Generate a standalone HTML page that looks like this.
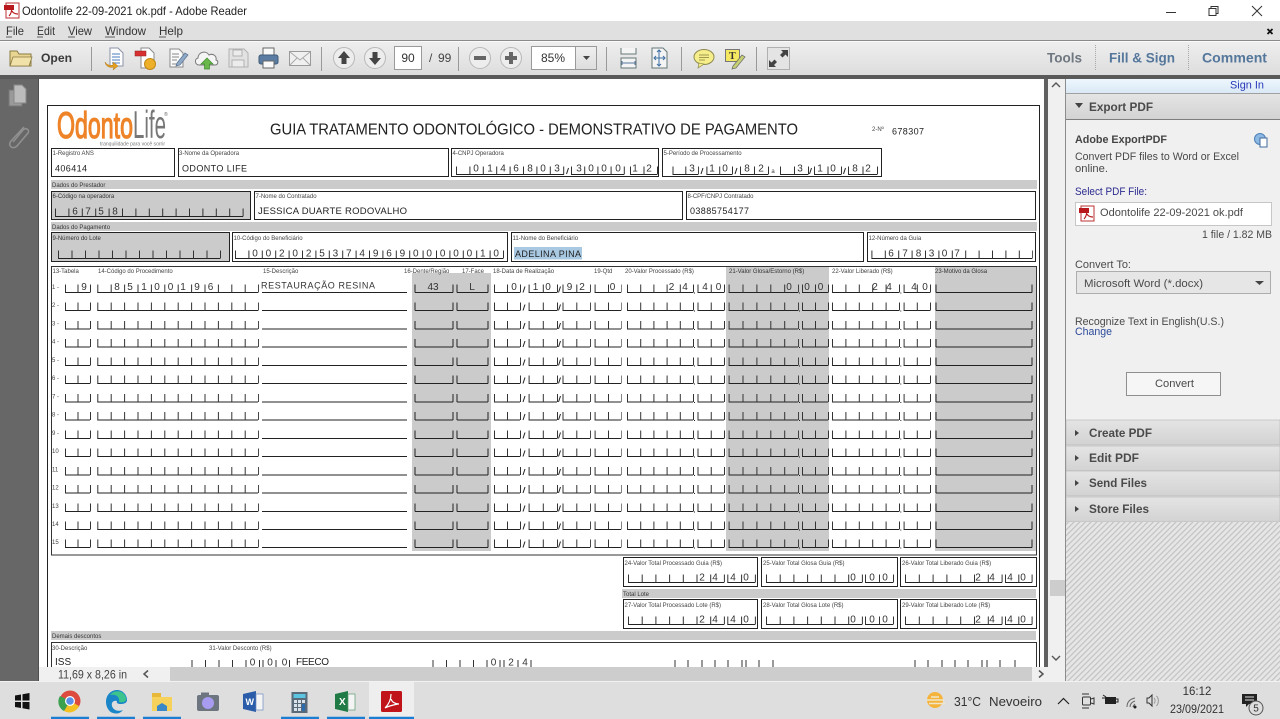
<!DOCTYPE html>
<html lang="pt">
<head>
<meta charset="utf-8">
<title>Odontolife 22-09-2021 ok.pdf - Adobe Reader</title>
<style>
html,body{margin:0;padding:0;background:#fff;width:1280px;height:719px;overflow:hidden}
svg{display:block;position:absolute;left:0;top:0;filter:blur(.3px)}
text{font-family:"Liberation Sans",sans-serif;fill:#333}
.l{font-size:6px;fill:#444}
.v{font-size:9px;fill:#222}
.d{font-size:10px;fill:#333;transform:translateY(.5px)}
.s{font-size:11px;fill:#4a4a4a}
.h{font-size:12px;font-weight:bold;fill:#4a4a4a}
.m{font-size:12px;fill:#333}
.b{stroke:#222;stroke-width:1;fill:none}
.t{stroke:#333;stroke-width:8;fill:none}
.f{fill:#fff;stroke:#222;stroke-width:1}
.g{fill:#cbcbcb;stroke:#222;stroke-width:1}
.bd{fill:#cbcbcb}
</style>
</head>
<body>
<svg width="1280" height="719" viewBox="0 0 1280 719" xmlns="http://www.w3.org/2000/svg">
<defs>
<linearGradient id="tb" x1="0" y1="0" x2="0" y2="1"><stop offset="0" stop-color="#efefef"/><stop offset="1" stop-color="#dddddd"/></linearGradient>
<linearGradient id="sec" x1="0" y1="0" x2="0" y2="1"><stop offset="0" stop-color="#e4e4e4"/><stop offset="1" stop-color="#d2d2d2"/></linearGradient>
<linearGradient id="sign" x1="0" y1="0" x2="0" y2="1"><stop offset="0" stop-color="#eef6fd"/><stop offset="1" stop-color="#d9e8f5"/></linearGradient>
<pattern id="hatch" width="4" height="4" patternUnits="userSpaceOnUse" patternTransform="rotate(45)"><rect width="4" height="4" fill="#e6e6e6"/><rect width="1.2" height="4" fill="#c2c2c2"/></pattern>
<g id="row">
<path class="b" d="M65 0H90M97.3 0H258M262 0H407M415 0H453M457 0H488M494 0H520M528.6 0H557M562.5 0H590M594.6 0H621M627 0H693M697.5 0H724M728.6 0H798M802 0H828M832 0H899M903.6 0H930M936 0H1032"/>
<path class="b" d="M415 0v-8M453 0v-8M457 0v-8M488 0v-8M936 0v-8M1032 0v-8M523 0l2-6M558.5 0l2-6M694.5 0v1M799.5 0v1M900.8 0v1"/>
<path class="t" d="M65 -4H91" stroke-dasharray="1 11.5"/>
<path class="t" d="M97.3 -4H259" stroke-dasharray="1 12.4"/>
<path class="t" d="M494 -4H521" stroke-dasharray="1 12"/>
<path class="t" d="M528.6 -4H558" stroke-dasharray="1 13.2"/>
<path class="t" d="M562.5 -4H591" stroke-dasharray="1 12.8"/>
<path class="t" d="M594.6 -4H622" stroke-dasharray="1 12.4"/>
<path class="t" d="M627 -4H694" stroke-dasharray="1 12.2"/>
<path class="t" d="M697.5 -4H725" stroke-dasharray="1 12.25"/>
<path class="t" d="M728.6 -4H799" stroke-dasharray="1 12.9"/>
<path class="t" d="M802 -4H829" stroke-dasharray="1 12"/>
<path class="t" d="M832 -4H900" stroke-dasharray="1 12.4"/>
<path class="t" d="M903.6 -4H931" stroke-dasharray="1 12.2"/>
</g>
<g id="pdfi"><rect x="0" y="0" width="13" height="15" fill="#fff" stroke="#b33" stroke-width="1"/><rect x="-2" y="2" width="10" height="5" fill="#b8181c"/><path d="M3 13c2-2 3-6 3-10M6 8c1 2 3 3 6 3" stroke="#b8181c" fill="none" stroke-width="1.2"/></g>
</defs>

<!-- window base -->
<rect width="1280" height="719" fill="#fff"/>

<!-- title bar -->
<use href="#pdfi" x="6" y="3"/>
<text x="22" y="15" style="fill:#222;font-size:12px" textLength="225" lengthAdjust="spacingAndGlyphs">Odontolife 22-09-2021 ok.pdf - Adobe Reader</text>
<path d="M1166 12.5h10" stroke="#333" fill="none"/>
<path d="M1209 8.5h7v7h-7zM1211 8.500v-2h7v7h-2" stroke="#333" fill="none"/>
<path d="M1252 6l10 10M1262 6l-10 10" stroke="#333" fill="none"/>

<!-- menu bar -->
<rect x="0" y="21" width="1280" height="19" fill="#e0e0e0"/>
<g>
<text x="6" y="35" class="m" textLength="18" lengthAdjust="spacingAndGlyphs">File</text>
<text x="37" y="35" class="m" textLength="18" lengthAdjust="spacingAndGlyphs">Edit</text>
<text x="68" y="35" class="m" textLength="24" lengthAdjust="spacingAndGlyphs">View</text>
<text x="105" y="35" class="m" textLength="41" lengthAdjust="spacingAndGlyphs">Window</text>
<text x="159" y="35" class="m" textLength="24" lengthAdjust="spacingAndGlyphs">Help</text>
<path d="M6 37h6M37 37h6M68 37h7M105 37h10M159 37h7" stroke="#333" stroke-width=".8"/>
</g>
<path d="M1267.500 29l5 5M1272.500 29l-5 5" stroke="#111" stroke-width="1.800"/>

<!-- toolbar -->
<rect x="0" y="40" width="1280" height="35" fill="url(#tb)"/>
<path d="M0 40.500H1280" stroke="#8a8a8a"/>
<path d="M0 41.500H1280" stroke="#fafafa"/>
<!-- open -->
<path d="M10 51h7l2 3h12v12H10z" fill="#e8d592" stroke="#8a7a40"/>
<path d="M10 66l3-9h19l-3 9z" fill="#f0e2a8" stroke="#8a7a40" stroke-width=".8"/>
<text x="41" y="62" class="h" style="fill:#3a3a3a" textLength="31" lengthAdjust="spacingAndGlyphs">Open</text>
<path d="M91.500 47V71M321.500 47V71M458.500 47V71M606.500 47V71M681.500 47V71M756.500 47V71" stroke="#9a9a9a"/>
<!-- create/doc -->
<path d="M110 48h8l5 5v13h-13z" fill="#fdfdfd" stroke="#8b93a8"/>
<path d="M112 54h8M112 57h8M112 60h8M112 63h8" stroke="#4a7cc0"/>
<path d="M105 62c1 5 5 6 9 5l-1 3 5-4-5-4v3c-3 1-6 0-8-3z" fill="#e6a020" stroke="#a8741a" stroke-width=".5"/>
<!-- combine -->
<path d="M141 48h8l5 5v15h-13z" fill="#fdfdfd" stroke="#8b8b8b"/>
<rect x="135" y="51" width="11" height="5" fill="#d83030" stroke="#902020" stroke-width=".5"/>
<circle cx="150" cy="64" r="5.500" fill="#eeb028" stroke="#c08818"/>
<!-- edit -->
<path d="M170 49h9l4 4v14h-13z" fill="#fafafa" stroke="#8b8b8b"/>
<path d="M172 54h7M172 57h7M172 60h5M172 64h7" stroke="#888"/>
<path d="M177 63l8-10 3 2-8 10-4 1z" fill="#8faac8" stroke="#56708e" stroke-width=".7"/>
<!-- cloud -->
<path d="M199 65c-4 0-5-6-1-7 0-6 8-8 11-3 4-2 8 1 7 5 3 1 2 5-1 5z" fill="#f5f5f5" stroke="#7a7a7a"/>
<path d="M207 58l6 6h-3.500v5h-5v-5H201z" fill="#6ab84a" stroke="#3e8a2c" stroke-width=".7"/>
<!-- save -->
<path d="M229 49h15l4 4v14h-19z" fill="#e2e2e2" stroke="#b2b2b2"/>
<rect x="233" y="50" width="9" height="6" fill="#ececec" stroke="#b2b2b2"/>
<rect x="232" y="60" width="12" height="7" fill="#ececec" stroke="#b2b2b2"/>
<!-- print -->
<rect x="263" y="48" width="11" height="8" fill="#fafafa" stroke="#666"/>
<rect x="259" y="55" width="19" height="9" rx="2" fill="#5b7da3" stroke="#3f5a78"/>
<rect x="263" y="61" width="11" height="7" fill="#fafafa" stroke="#666"/>
<!-- mail -->
<rect x="289.500" y="51.500" width="21" height="14" fill="#f0f0f0" stroke="#9a9a9a"/>
<path d="M290 52l10 8 10-8M290 65l7-7M310 65l-7-7" stroke="#aaa" fill="none"/>
<!-- page nav -->
<circle cx="344" cy="58" r="10.500" fill="#ededed" stroke="#b8b8b8"/>
<path d="M344 51l6 7h-3.500v6h-5v-6H338z" fill="#444"/>
<circle cx="375" cy="58" r="10.500" fill="#ededed" stroke="#b8b8b8"/>
<path d="M375 65l6-7h-3.500v-6h-5v6H369z" fill="#444"/>
<rect x="394.500" y="46.500" width="27" height="23" fill="#fff" stroke="#9a9a9a"/>
<text x="408" y="62" text-anchor="middle" style="fill:#333;font-size:12px">90</text>
<text x="429" y="62" style="fill:#444;font-size:12px">/</text>
<text x="438" y="62" style="fill:#444;font-size:12px">99</text>
<circle cx="480" cy="58" r="10.500" fill="#ededed" stroke="#b8b8b8"/>
<rect x="474" y="56" width="12" height="4" fill="#666"/>
<circle cx="511" cy="58" r="10.500" fill="#ededed" stroke="#b8b8b8"/>
<path d="M509 52h4v4h4v4h-4v4h-4v-4h-4v-4h4z" fill="#666"/>
<rect x="531.500" y="46.500" width="65" height="23" fill="#fff" stroke="#9a9a9a"/>
<rect x="575.500" y="46.500" width="21" height="23" fill="url(#tb)" stroke="#9a9a9a"/>
<path d="M583 56h7l-3.500 4z" fill="#444"/>
<text x="553" y="62" text-anchor="middle" style="fill:#333;font-size:12px">85%</text>
<!-- fit icons -->
<path d="M621 48v6h15v-6M621 58h15v10h-15z" fill="#f4f4f4" stroke="#677"/>
<path d="M622 63h13M622 61v4M635 61v4" stroke="#5878a0" fill="none"/>
<path d="M652 48h11l4 4v16h-15z" fill="#f4f4f4" stroke="#677"/>
<path d="M659 50v16M654 58h11M657 52l2-2 2 2M657 64l2 2 2-2M656 56l-2 2 2 2M663 56l2 2-2 2" stroke="#3d6ea3" fill="none"/>
<!-- comment -->
<ellipse cx="704" cy="57" rx="10" ry="7.500" fill="#f5ee8a" stroke="#8f8a50"/>
<path d="M699 63l-1 5 6-4z" fill="#f5ee8a" stroke="#8f8a50" stroke-width=".7"/>
<path d="M699 55h10M699 57.500h10M699 60h6" stroke="#a09a50"/>
<rect x="725.500" y="49.500" width="14" height="12" fill="#f4e860" stroke="#777"/>
<text x="729" y="59" style="font-size:10px;font-weight:bold;fill:#333;font-family:'Liberation Serif',serif">T</text>
<path d="M733 66l9-11 3 2-9 11-4 1z" fill="#c6cf72" stroke="#666" stroke-width=".7"/>
<!-- fullscreen -->
<rect x="767.500" y="47.500" width="22" height="22" fill="#e4e4e4" stroke="#b0b0b0"/>
<path d="M781 50h7v7l-2.500-2.500-3 3-2.500-2.500 3-3z" fill="#444"/>
<path d="M776 67h-7v-7l2.500 2.500 3-3 2.500 2.500-3 3z" fill="#444"/>
<!-- tools labels -->
<text x="1047" y="62.500" style="font-size:14px;font-weight:bold;fill:#6f7780" textLength="35" lengthAdjust="spacingAndGlyphs">Tools</text>
<text x="1109" y="62.500" style="font-size:14px;font-weight:bold;fill:#54779b" textLength="66" lengthAdjust="spacingAndGlyphs">Fill &amp; Sign</text>
<text x="1202" y="62.500" style="font-size:14px;font-weight:bold;fill:#54779b" textLength="65" lengthAdjust="spacingAndGlyphs">Comment</text>
<path d="M1095.500 45V71M1188.500 45V71" stroke="#a8a8a8" stroke-dasharray="1 1"/>
<rect x="0" y="75" width="1280" height="4" fill="#595959"/>

<!-- left panel -->
<rect x="0" y="79" width="39" height="602" fill="#676767"/>
<path d="M38.500 79V681" stroke="#4f4f4f"/>
<path d="M9 90h13v16H9z" fill="#9a9a9a" stroke="#777"/>
<path d="M14 85h8l4 4v14H14z" fill="#bcbcbc" stroke="#888"/>
<path d="M24 127l-13 14c-4 5 2 9 6 5l11-13c2-3-2-6-5-3l-10 12" fill="none" stroke="#909090" stroke-width="1.600"/>

<!-- doc area -->
<rect x="39" y="79" width="1005" height="588" fill="#fff"/>
<rect x="1044" y="79" width="4" height="588" fill="#606060"/>
<rect x="1048" y="79" width="17" height="588" fill="#f0f0f0"/>
<rect x="1050" y="580" width="15" height="16" fill="#cdcdcd"/>
<path d="M1052 87l4-4 4 4M1052 656l4 4 4-4" stroke="#555" fill="none" stroke-width="1.400"/>

<!-- page -->
<path d="M47.500 667V105.500H1039.500V667" fill="none" stroke="#222"/>

<!-- logo -->
<text x="57" y="138" style="font-size:37px;fill:#ee8328;stroke:#ee8328;stroke-width:1.300" textLength="76" lengthAdjust="spacingAndGlyphs">Odonto</text>
<text x="133" y="138" style="font-size:39px;fill:#777" textLength="33" lengthAdjust="spacingAndGlyphs">Life</text>
<text x="164" y="116" style="font-size:5px;fill:#666">®</text>
<text x="100" y="145.500" style="font-size:5px;fill:#777" textLength="65" lengthAdjust="spacingAndGlyphs">tranquilidade para você sorrir</text>

<text x="270" y="134.500" style="font-size:15.500px;fill:#222" textLength="528" lengthAdjust="spacingAndGlyphs">GUIA TRATAMENTO ODONTOLÓGICO - DEMONSTRATIVO DE PAGAMENTO</text>
<text x="872" y="131" class="l">2-Nº</text>
<text x="892" y="134.500" class="v" textLength="32">678307</text>

<!-- row 1 boxes -->
<rect class="f" x="51.500" y="148.500" width="123" height="28"/>
<rect class="f" x="178.500" y="148.500" width="270" height="28"/>
<rect class="f" x="451.500" y="148.500" width="207" height="28"/>
<rect class="f" x="662.500" y="148.500" width="219" height="28"/>
<text x="52.500" y="155" class="l">1-Registro ANS</text>
<text x="179" y="155" class="l">3-Nome da Operadora</text>
<text x="452.500" y="155" class="l">4-CNPJ Operadora</text>
<text x="663.500" y="155" class="l">5-Período de Processamento</text>
<text x="55" y="171.500" class="v" textLength="32">406414</text>
<text x="182" y="171.500" class="v" textLength="65">ODONTO LIFE</text>
<path class="b" d="M456 174.500H564M571 174.500H624M630 174.500H657M672.500 174.500H698M706.400 174.500H732M740 174.500H768M780 174.500H808M814 174.500H841M848 174.500H877"/>
<path class="t" d="M456 170.500H565" stroke-dasharray="1 12.400"/>
<path class="t" d="M571 170.500H625" stroke-dasharray="1 12.200"/>
<path class="t" d="M630 170.500H658" stroke-dasharray="1 12.500"/>
<path class="t" d="M672.500 170.500H699" stroke-dasharray="1 11.800"/>
<path class="t" d="M706.400 170.500H733" stroke-dasharray="1 11.800"/>
<path class="t" d="M740 170.500H769" stroke-dasharray="1 13"/>
<path class="t" d="M780 170.500H809" stroke-dasharray="1 13"/>
<path class="t" d="M814 170.500H842" stroke-dasharray="1 12.500"/>
<path class="t" d="M848 170.500H878" stroke-dasharray="1 13.500"/>
<path class="b" d="M566.500 174l2-6M701 174l2-6M735 174l2-6M809.500 174l2-6M843.500 174l2-6"/>
<g text-anchor="middle">
<text x="476" y="171" class="d">0</text><text x="490" y="171" class="d">1</text><text x="503" y="171" class="d">4</text><text x="516" y="171" class="d">6</text><text x="530" y="171" class="d">8</text><text x="543" y="171" class="d">0</text><text x="557" y="171" class="d">3</text><text x="579" y="171" class="d">3</text><text x="591" y="171" class="d">0</text><text x="604" y="171" class="d">0</text><text x="618" y="171" class="d">0</text><text x="635" y="171" class="d">1</text><text x="649" y="171" class="d">2</text>
<text x="692" y="171" class="d">3</text><text x="712" y="171" class="d">1</text><text x="725" y="171" class="d">0</text><text x="747" y="171" class="d">8</text><text x="761" y="171" class="d">2</text><text x="800" y="171" class="d">3</text><text x="820" y="171" class="d">1</text><text x="833" y="171" class="d">0</text><text x="855" y="171" class="d">8</text><text x="868" y="171" class="d">2</text>
<text x="773" y="173" class="l">a</text>
</g>

<!-- band -->
<rect class="bd" x="51" y="180" width="986" height="9"/>
<text x="52" y="187" class="l" style="fill:#333">Dados do Prestador</text>

<!-- row 2 -->
<rect class="g" x="51.500" y="191.500" width="199" height="28"/>
<rect class="f" x="254.500" y="191.500" width="428" height="28"/>
<rect class="f" x="686.500" y="191.500" width="349" height="28"/>
<text x="52.500" y="198" class="l" style="fill:#333">6-Código na operadora</text>
<text x="255.500" y="198" class="l">7-Nome do Contratado</text>
<text x="687.500" y="198" class="l">8-CPF/CNPJ Contratado</text>
<path class="b" d="M55 216.500H243"/>
<path class="t" d="M55 212.500H244" stroke-dasharray="1 12.400"/>
<g text-anchor="middle"><text x="75" y="214" class="d">6</text><text x="88" y="214" class="d">7</text><text x="101" y="214" class="d">5</text><text x="115" y="214" class="d">8</text></g>
<text x="258" y="214" class="v" style="font-size:9.500px" textLength="149">JESSICA DUARTE RODOVALHO</text>
<text x="690" y="214" class="v" textLength="59">03885754177</text>

<!-- band -->
<rect class="bd" x="51" y="222" width="986" height="9"/>
<text x="52" y="229" class="l" style="fill:#333">Dados do Pagamento</text>

<!-- row 3 -->
<rect class="g" x="51.500" y="232.500" width="178" height="29"/>
<rect class="f" x="232.500" y="232.500" width="275" height="29"/>
<rect class="f" x="511.500" y="232.500" width="352" height="29"/>
<rect class="f" x="867.500" y="232.500" width="168" height="29"/>
<text x="52.500" y="240" class="l" style="fill:#333">9-Número do Lote</text>
<text x="233.500" y="240" class="l">10-Código do Beneficiário</text>
<text x="512.500" y="240" class="l">11-Nome do Beneficiário</text>
<text x="868.500" y="240" class="l">12-Número da Guia</text>
<path class="b" d="M58 258.500H220M235 258.500H503M871.400 258.500H1032"/>
<path class="t" d="M58 254.500H221" stroke-dasharray="1 12.500"/>
<path class="t" d="M235 254.500H504" stroke-dasharray="1 12.400"/>
<path class="t" d="M871.400 254.500H1033" stroke-dasharray="1 12.400"/>
<g text-anchor="middle">
<text x="255" y="256" class="d">0</text><text x="268.400" y="256" class="d">0</text><text x="281.800" y="256" class="d">2</text><text x="295.200" y="256" class="d">0</text><text x="308.600" y="256" class="d">2</text><text x="322" y="256" class="d">5</text><text x="335.400" y="256" class="d">3</text><text x="348.800" y="256" class="d">7</text><text x="362.200" y="256" class="d">4</text><text x="375.600" y="256" class="d">9</text><text x="389" y="256" class="d">6</text><text x="402.400" y="256" class="d">9</text><text x="415.800" y="256" class="d">0</text><text x="429.200" y="256" class="d">0</text><text x="442.600" y="256" class="d">0</text><text x="456" y="256" class="d">0</text><text x="469.400" y="256" class="d">0</text><text x="482.800" y="256" class="d">1</text><text x="496.200" y="256" class="d">0</text>
<text x="891" y="256" class="d">6</text><text x="905" y="256" class="d">7</text><text x="918.500" y="256" class="d">8</text><text x="931.500" y="256" class="d">3</text><text x="944.500" y="256" class="d">0</text><text x="957" y="256" class="d">7</text>
</g>
<rect x="514" y="247" width="68" height="12.500" fill="#a9c8e2"/>
<text x="515" y="257" class="v" textLength="66">ADELINA PINA</text>

<!-- table -->
<rect class="bd" x="412" y="273" width="79" height="278"/>
<rect class="bd" x="726" y="266" width="103" height="285"/>
<rect class="bd" x="935" y="266" width="101" height="285"/>
<rect x="51.500" y="266.500" width="985" height="288.500" fill="none" stroke="#333"/>
<g>
<text x="52.500" y="273" class="l">13-Tabela</text>
<text x="98" y="273" class="l">14-Código do Procedimento</text>
<text x="263" y="273" class="l">15-Descrição</text>
<text x="404" y="273" class="l">16-Dente/Região</text>
<text x="462" y="273" class="l">17-Face</text>
<text x="493" y="273" class="l">18-Data de Realização</text>
<text x="594" y="273" class="l">19-Qtd</text>
<text x="625" y="273" class="l">20-Valor Processado (R$)</text>
<text x="729" y="273" class="l" style="fill:#333">21-Valor Glosa/Estorno (R$)</text>
<text x="832" y="273" class="l">22-Valor Liberado (R$)</text>
<text x="935" y="273" class="l" style="fill:#333">23-Motivo da Glosa</text>
</g>
<use href="#row" y="292.500"/><use href="#row" y="310.500"/><use href="#row" y="329"/><use href="#row" y="347"/><use href="#row" y="365.500"/><use href="#row" y="383.500"/><use href="#row" y="402"/><use href="#row" y="420"/><use href="#row" y="438.500"/><use href="#row" y="456.500"/><use href="#row" y="475"/><use href="#row" y="493"/><use href="#row" y="511.500"/><use href="#row" y="529.500"/><use href="#row" y="547.500"/>
<g>
<text x="52" y="289" class="l">1 -</text><text x="52" y="307" class="l">2 -</text><text x="52" y="325.500" class="l">3 -</text><text x="52" y="343.500" class="l">4 -</text><text x="52" y="362" class="l">5 -</text><text x="52" y="380" class="l">6 -</text><text x="52" y="398.500" class="l">7 -</text><text x="52" y="416.500" class="l">8 -</text><text x="52" y="435" class="l">9 -</text><text x="52" y="453" class="l">10</text><text x="52" y="471.500" class="l">11</text><text x="52" y="489.500" class="l">12</text><text x="52" y="508" class="l">13</text><text x="52" y="526" class="l">14</text><text x="52" y="544" class="l">15</text>
</g>
<g text-anchor="middle">
<text x="84" y="289.500" class="d">9</text>
<text x="117" y="289.500" class="d">8</text><text x="130" y="289.500" class="d">5</text><text x="144" y="289.500" class="d">1</text><text x="157" y="289.500" class="d">0</text><text x="170.500" y="289.500" class="d">0</text><text x="183" y="289.500" class="d">1</text><text x="197" y="289.500" class="d">9</text><text x="210.500" y="289.500" class="d">6</text>
<text x="433" y="289.500" class="d">43</text><text x="472" y="289.500" class="d">L</text>
<text x="514" y="289.500" class="d">0</text><text x="535.500" y="289.500" class="d">1</text><text x="548" y="289.500" class="d">0</text><text x="569.500" y="289.500" class="d">9</text><text x="582" y="289.500" class="d">2</text><text x="612.500" y="289.500" class="d">0</text>
<text x="671.500" y="289.500" class="d">2</text><text x="685" y="289.500" class="d">4</text><text x="705" y="289.500" class="d">4</text><text x="718.500" y="289.500" class="d">0</text>
<text x="789" y="289.500" class="d">0</text><text x="807" y="289.500" class="d">0</text><text x="820.500" y="289.500" class="d">0</text>
<text x="875" y="289.500" class="d">2</text><text x="889" y="289.500" class="d">4</text><text x="914" y="289.500" class="d">4</text><text x="925" y="289.500" class="d">0</text>
</g>
<text x="261" y="288.500" class="v" style="fill:#333" textLength="114">RESTAURAÇÃO RESINA</text>

<!-- totals -->
<rect class="f" x="623.500" y="557.500" width="134" height="29"/>
<rect class="f" x="761.500" y="557.500" width="136" height="29"/>
<rect class="f" x="900.500" y="557.500" width="136" height="29"/>
<rect class="f" x="623.500" y="599.500" width="134" height="29"/>
<rect class="f" x="761.500" y="599.500" width="136" height="29"/>
<rect class="f" x="900.500" y="599.500" width="136" height="29"/>
<text x="624.500" y="565" class="l">24-Valor Total Processado Guia (R$)</text>
<text x="763" y="565" class="l">25-Valor Total Glosa Guia (R$)</text>
<text x="902" y="565" class="l">26-Valor Total Liberado Guia (R$)</text>
<text x="624.500" y="607" class="l">27-Valor Total Processado Lote (R$)</text>
<text x="763" y="607" class="l">28-Valor Total Glosa Lote (R$)</text>
<text x="902" y="607" class="l">29-Valor Total Liberado Lote (R$)</text>
<rect class="bd" x="622" y="589" width="414" height="9"/>
<text x="623" y="596" class="l" style="fill:#333">Total Lote</text>
<g id="tot">
<path class="b" d="M628 582.500H724M727.300 582.500H755M766 582.500H862M865 582.500H893M905 582.500H1002M1005 582.500H1032"/>
<path class="t" d="M628 578.500H725" stroke-dasharray="1 12.700"/>
<path class="t" d="M727.300 578.500H756" stroke-dasharray="1 12.800"/>
<path class="t" d="M766 578.500H863" stroke-dasharray="1 12.700"/>
<path class="t" d="M865 578.500H894" stroke-dasharray="1 13"/>
<path class="t" d="M905 578.500H1003" stroke-dasharray="1 12.800"/>
<path class="t" d="M1005 578.500H1033" stroke-dasharray="1 12.300"/>
<g text-anchor="middle">
<text x="702" y="580" class="d">2</text><text x="715" y="580" class="d">4</text><text x="733" y="580" class="d">4</text><text x="746" y="580" class="d">0</text>
<text x="853" y="580" class="d">0</text><text x="872" y="580" class="d">0</text><text x="885" y="580" class="d">0</text>
<text x="978" y="580" class="d">2</text><text x="992" y="580" class="d">4</text><text x="1010" y="580" class="d">4</text><text x="1023" y="580" class="d">0</text>
</g>
</g>
<use href="#tot" y="42"/>

<rect class="bd" x="51" y="631" width="985" height="9"/>
<text x="52" y="638" class="l" style="fill:#333">Demais descontos</text>
<rect x="51.500" y="642.500" width="985" height="40" fill="#fff" stroke="#333"/>
<text x="52" y="650" class="l">30-Descrição</text>
<text x="209" y="650" class="l">31-Valor Desconto (R$)</text>
<text x="55" y="665" style="font-size:10px;fill:#222">ISS</text>
<text x="296" y="665" style="font-size:10px;fill:#222" textLength="33">FEECO</text>
<path d="M192 660v7M205.500 660v7M219 660v7M232.500 660v7M246 660v7M259.500 660v7M263 660v7M276 660v7M289.500 660v7M433 660v7M446.500 660v7M460 660v7M473.500 660v7M487 660v7M500 660v7M504 660v7M518 660v7M531 660v7M675 660v7M688 660v7M702 660v7M715 660v7M728 660v7M742 660v7M746 660v7M759 660v7M773 660v7M915 660v7M928 660v7M942 660v7M955 660v7M968 660v7M982 660v7M987 660v7M1000 660v7M1015 660v7" stroke="#333"/>
<g text-anchor="middle">
<text x="252.500" y="665" class="d">0</text><text x="270" y="665" class="d">0</text><text x="284.500" y="665" class="d">0</text>
<text x="493.500" y="665" class="d">0</text><text x="511" y="665" class="d">2</text><text x="525" y="665" class="d">4</text>
</g>

<!-- horizontal scrollbar -->
<rect x="39" y="667" width="1026" height="14" fill="#f0f0f0"/>
<rect x="170" y="667" width="862" height="14" fill="#cdcdcd"/>
<text x="58" y="678.500" style="font-size:12px;fill:#444" textLength="69" lengthAdjust="spacingAndGlyphs">11,69 x 8,26 in</text>
<path d="M148 670.500l-4 3.500 4 3.500M1039 670.500l4 3.500-4 3.500" stroke="#555" fill="none" stroke-width="1.500"/>

<!-- right panel -->
<rect x="1065" y="79" width="215" height="602" fill="#f0f0f0"/>
<path d="M1065.500 79V681" stroke="#8c8c8c"/>
<rect x="1066" y="79" width="214" height="14" fill="url(#sign)"/>
<text x="1230" y="88.500" style="font-size:11px;fill:#2638b8" textLength="34" lengthAdjust="spacingAndGlyphs">Sign In</text>
<rect x="1066" y="94" width="214" height="26" fill="url(#sec)"/>
<path d="M1066 93.500H1280" stroke="#a0a0a0"/>
<path d="M1066 119.500H1280" stroke="#7e7e7e"/>
<path d="M1075 103h8l-4 5z" fill="#444"/>
<text x="1089" y="111" class="h" textLength="64" lengthAdjust="spacingAndGlyphs">Export PDF</text>
<text x="1075" y="143" class="s" style="font-weight:bold;fill:#444" textLength="92" lengthAdjust="spacingAndGlyphs">Adobe ExportPDF</text>
<circle cx="1260" cy="139" r="5.500" fill="#8cb8e4" stroke="#4d7fb8"/>
<path d="M1260 138h7v9h-7z" fill="#fff" stroke="#406a9c"/>
<text x="1075" y="160" class="s" textLength="164" lengthAdjust="spacingAndGlyphs">Convert PDF files to Word or Excel</text>
<text x="1075" y="172" class="s" textLength="33" lengthAdjust="spacingAndGlyphs">online.</text>
<text x="1075" y="195" class="s" style="fill:#2b2b90" textLength="72" lengthAdjust="spacingAndGlyphs">Select PDF File:</text>
<rect x="1075.500" y="202.500" width="196" height="23" fill="#fff" stroke="#c6c6c6"/>
<use href="#pdfi" x="1081" y="206"/>
<text x="1100" y="216" class="s" textLength="143" lengthAdjust="spacingAndGlyphs">Odontolife 22-09-2021 ok.pdf</text>
<text x="1202" y="238" class="s" textLength="70" lengthAdjust="spacingAndGlyphs">1 file / 1.82 MB</text>
<text x="1075" y="268" class="s" textLength="56" lengthAdjust="spacingAndGlyphs">Convert To:</text>
<rect x="1076.500" y="271.500" width="194" height="22" fill="#e6e6e6" stroke="#adadad"/>
<text x="1084" y="287" class="s" textLength="119" lengthAdjust="spacingAndGlyphs">Microsoft Word (*.docx)</text>
<path d="M1255 281h9l-4.500 4z" fill="#444"/>
<text x="1075" y="325" class="s" textLength="149" lengthAdjust="spacingAndGlyphs">Recognize Text in English(U.S.)</text>
<text x="1075" y="335" class="s" style="fill:#2b4a9a" textLength="37" lengthAdjust="spacingAndGlyphs">Change</text>
<rect x="1126.500" y="372.500" width="94" height="23" fill="#f6f6f6" stroke="#8f8f8f"/>
<text x="1155" y="387" class="s" textLength="39" lengthAdjust="spacingAndGlyphs">Convert</text>

<rect x="1066" y="420" width="214" height="25" fill="url(#sec)" stroke="#aaa" stroke-width=".5"/>
<rect x="1066" y="446" width="214" height="25" fill="url(#sec)" stroke="#aaa" stroke-width=".5"/>
<rect x="1066" y="471" width="214" height="25" fill="url(#sec)" stroke="#aaa" stroke-width=".5"/>
<rect x="1066" y="497" width="214" height="25" fill="url(#sec)" stroke="#aaa" stroke-width=".5"/>
<path d="M1075 430l4 3-4 3zM1075 455l4 3-4 3zM1075 480l4 3-4 3zM1075 506l4 3-4 3z" fill="#444"/>
<text x="1089" y="437" class="h" textLength="63" lengthAdjust="spacingAndGlyphs">Create PDF</text>
<text x="1089" y="462" class="h" textLength="50" lengthAdjust="spacingAndGlyphs">Edit PDF</text>
<text x="1089" y="487" class="h" textLength="58" lengthAdjust="spacingAndGlyphs">Send Files</text>
<text x="1089" y="513" class="h" textLength="60" lengthAdjust="spacingAndGlyphs">Store Files</text>
<rect x="1066" y="522" width="214" height="159" fill="url(#hatch)"/>

<!-- taskbar -->
<rect x="0" y="681" width="1280" height="38" fill="#dedede"/>
<path d="M0 681.500H1280" stroke="#f2f2f2"/>
<rect x="369" y="682" width="45" height="37" fill="#eeeeee"/>
<path d="M51 718h38M97 718h38M143 718h38M281 718h38M327 718h38M369 718h45" stroke="#1a7ed2" stroke-width="2.500"/>
<!-- windows -->
<path d="M15 695.500l6-1v6h-6zM22.500 694.300l7-1.300v7.500h-7zM15 702h6v6l-6-1zM22.500 702h7v7.500l-7-1.300z" fill="#111"/>
<!-- chrome -->
<circle cx="70" cy="701" r="10.500" fill="#dd4b3e"/>
<path d="M70 701L79 706a10.500 10.500 0 0 1-15 5z" fill="#f3c122"/>
<path d="M70 701L64 711a10.500 10.500 0 0 1-4-15z" fill="#3ca14f"/>
<circle cx="70" cy="701" r="5" fill="#fff"/><circle cx="70" cy="701" r="3.800" fill="#5a8fe8"/>
<!-- edge -->
<path d="M106 702c0-8 6-12 11-12 6 0 10 5 10 10 0 3-3 4-6 4-3 0-5-1-4-3-3-1-6 1-5 5 1 4 6 6 11 4-3 4-7 4-10 3-4-1-7-6-7-11z" fill="#1a86c8"/>
<path d="M110 695c3-5 14-6 16 3 1 4-4 5-7 4 1-6-4-8-9-7z" fill="#3cc48c"/>
<!-- explorer -->
<rect x="152" y="697" width="20" height="14" fill="#f6d25c"/>
<rect x="152" y="693" width="9" height="4" fill="#e8b83a"/>
<path d="M157 711v-5l5-3 5 3v5z" fill="#3b88c8"/>
<!-- camera -->
<rect x="197" y="695" width="22" height="16" rx="2" fill="#6d7680"/>
<rect x="201" y="692.500" width="8" height="3" fill="#6d7680"/>
<circle cx="208" cy="703" r="6" fill="#a89cf0"/>
<!-- word -->
<path d="M243 694l13-3v21l-13-3z" fill="#2b5caa"/>
<rect x="256" y="694" width="7" height="16" fill="#f4f4f4" stroke="#6f8cc0" stroke-width=".7"/>
<text x="245.500" y="705" style="font-size:9px;font-weight:bold;fill:#fff">W</text>
<!-- calc -->
<rect x="291.500" y="692" width="16" height="21" fill="#5b6a78"/>
<rect x="293.500" y="694" width="12" height="4" fill="#5bc4e0"/>
<path d="M294 700h3v3h-3zM298 700h3v3h-3zM302 700h3v3h-3zM294 704h3v3h-3zM298 704h3v3h-3zM294 708h3v3h-3zM298 708h3v3h-3z" fill="#d8e2ea"/>
<rect x="302" y="704" width="3" height="7" fill="#2a6cae"/>
<!-- excel -->
<path d="M335 694l13-3v21l-13-3z" fill="#1f7a45"/>
<rect x="348" y="694" width="7" height="16" fill="#f4f4f4" stroke="#5a9a70" stroke-width=".7"/>
<text x="339" y="705" style="font-size:10px;font-weight:bold;fill:#fff">X</text>
<!-- acrobat -->
<rect x="381" y="691" width="21" height="21" rx="1.500" fill="#c0141a"/>
<path d="M385 708c3-3 6-8 6-14M391 699c1 3 4 5 8 5M385 708c3-2 8-3 13-4" stroke="#fff" fill="none" stroke-width="1.200"/>

<!-- tray -->
<circle cx="935" cy="700" r="8" fill="#f4b43c"/>
<path d="M927 700h17M929 703.500h16M931 697h8" stroke="#f2e6c8" stroke-width="1.400"/>
<text x="954" y="706" style="font-size:13px;fill:#333" textLength="27" lengthAdjust="spacingAndGlyphs">31°C</text>
<text x="989" y="706" style="font-size:13px;fill:#333" textLength="53" lengthAdjust="spacingAndGlyphs">Nevoeiro</text>
<path d="M1058 704l5.500-5.500 5.500 5.500" fill="none" stroke="#222" stroke-width="1.200"/>
<rect x="1082.500" y="697" width="8" height="8" rx="1" fill="none" stroke="#333"/>
<path d="M1082 694h7M1082 708h7M1091 699l3-1v6l-3-1" fill="none" stroke="#333"/>
<rect x="1105" y="697" width="11" height="7" fill="#222"/>
<path d="M1103 695l3 2M1102 698h3M1116 699h2v3h-2" stroke="#222" fill="none"/>
<path d="M1127 707c0-5 3-8 8-9M1130 707c0-3 2-5 5-6M1133 707c0-1 1-2 2-3" fill="none" stroke="#666"/>
<circle cx="1135" cy="707" r="1.500" fill="#222"/>
<path d="M1147 698h2l3-3v11l-3-3h-2z" fill="none" stroke="#333"/>
<path d="M1154 698c1.500 1.500 1.500 4 0 5.500M1156.500 696c2.500 2.500 2.500 7 0 10" fill="none" stroke="#999"/>
<text x="1197" y="695" text-anchor="middle" style="font-size:11.500px;fill:#333">16:12</text>
<text x="1170" y="713" style="font-size:11.500px;fill:#333" textLength="54" lengthAdjust="spacingAndGlyphs">23/09/2021</text>
<path d="M1242 694h15v10h-8l-3 3v-3h-4z" fill="#222"/>
<path d="M1245 697h9M1245 700h9" stroke="#ddd"/>
<circle cx="1256" cy="708" r="7" fill="#dedede" stroke="#555"/>
<text x="1256" y="711.500" text-anchor="middle" style="font-size:10px;fill:#333">5</text>
</svg>
</body>
</html>
